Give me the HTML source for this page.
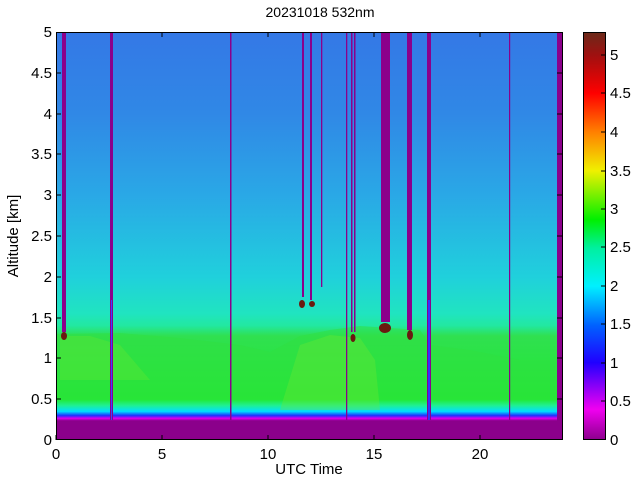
<!DOCTYPE html>
<html><head><meta charset="utf-8"><style>
body{margin:0;background:#fff;width:640px;height:480px;overflow:hidden;font-family:"Liberation Sans",sans-serif}
</style></head><body>
<svg width="640" height="480" xmlns="http://www.w3.org/2000/svg" font-family="Liberation Sans, sans-serif" font-size="15" fill="#000">
<defs>
<linearGradient id="bg" x1="0" y1="32" x2="0" y2="440" gradientUnits="userSpaceOnUse">
<stop offset="0" stop-color="#3478e6"/>
<stop offset="0.2" stop-color="#3088e6"/>
<stop offset="0.4" stop-color="#2aa8e6"/>
<stop offset="0.6" stop-color="#20d0dc"/>
<stop offset="0.69" stop-color="#20e4c0"/>
<stop offset="0.72" stop-color="#22e8a0"/>
<stop offset="0.745" stop-color="#30e050"/>
<stop offset="0.9" stop-color="#20ea30"/>
<stop offset="0.915" stop-color="#20f090"/>
<stop offset="0.93" stop-color="#00e0ff"/>
<stop offset="0.94" stop-color="#2030ff"/>
<stop offset="0.947" stop-color="#e000f0"/>
<stop offset="0.953" stop-color="#8b008b"/>
<stop offset="1" stop-color="#8b008b"/>
</linearGradient>
<linearGradient id="cb" x1="0" y1="440" x2="0" y2="32" gradientUnits="userSpaceOnUse">
<stop offset="0" stop-color="#8b008b"/>
<stop offset="0.075" stop-color="#f000f0"/>
<stop offset="0.19" stop-color="#2000ff"/>
<stop offset="0.28" stop-color="#0060ff"/>
<stop offset="0.377" stop-color="#00f0ff"/>
<stop offset="0.47" stop-color="#00f0a0"/>
<stop offset="0.54" stop-color="#00f000"/>
<stop offset="0.66" stop-color="#f0f000"/>
<stop offset="0.755" stop-color="#ff8000"/>
<stop offset="0.85" stop-color="#ff0000"/>
<stop offset="0.943" stop-color="#a01010"/>
<stop offset="1" stop-color="#6a2a1a"/>
</linearGradient>
</defs>
<text x="320" y="17" text-anchor="middle" font-size="14">20231018 532nm</text>
<rect x="56" y="32" width="506" height="408" fill="url(#bg)"/>
<path d="M56,334 L120,333 L180,338 L240,345 L270,352 L300,336 L330,330 L360,326 L420,330 L430,345 L470,350 L520,360 L556,360 L556,400 L56,400Z" fill="#30e040" opacity="0.5"/>
<path d="M280,410 L300,345 L330,335 L360,338 L375,360 L380,410Z" fill="#70e830" opacity="0.35"/>
<path d="M60,336 L90,336 L120,345 L150,380 L60,380Z" fill="#70e830" opacity="0.3"/>
<g fill="#8b008b">
<rect x="62" y="32" width="4" height="300"/>
<rect x="110" y="32" width="3" height="388"/>
<rect x="230" y="32" width="1.5" height="388"/>
<rect x="302" y="32" width="2" height="265"/>
<rect x="310" y="32" width="2" height="268"/>
<rect x="321" y="32" width="1.3" height="255"/>
<rect x="346" y="32" width="1.3" height="388"/>
<rect x="351" y="32" width="1.5" height="300"/>
<rect x="354" y="32" width="1.5" height="300"/>
<rect x="381" y="32" width="9" height="290"/>
<rect x="407" y="32" width="5" height="298"/>
<rect x="427" y="32" width="4" height="388"/>
<rect x="509" y="32" width="1.2" height="388"/>
<rect x="557" y="32" width="5" height="408"/>
</g>
<rect x="111" y="300" width="1" height="120" fill="#4040ff"/>
<rect x="428" y="300" width="2" height="120" fill="#3030ff"/>
<g fill="#6a1a10">
<ellipse cx="64" cy="336" rx="3" ry="4"/>
<ellipse cx="302" cy="304" rx="3" ry="4"/>
<ellipse cx="312" cy="304" rx="3" ry="3"/>
<ellipse cx="353" cy="338" rx="2.5" ry="4"/>
<ellipse cx="385" cy="328" rx="6" ry="5"/>
<ellipse cx="410" cy="335" rx="3" ry="5"/>
</g>
<rect x="56.5" y="32.5" width="506" height="407" fill="none" stroke="#000"/>
<g stroke="#000">
<path d="M56,440v-5M162,440v-5M268,440v-5M374,440v-5M480,440v-5M162,32v5M268,32v5M374,32v5M480,32v5"/>
<path d="M56,399h5M56,358h5M56,318h5M56,277h5M56,236h5M56,195h5M56,154h5M56,114h5M56,73h5"/>
<path d="M562,399h-5M562,358h-5M562,318h-5M562,277h-5M562,236h-5M562,195h-5M562,154h-5M562,114h-5M562,73h-5"/>
</g>
<g text-anchor="end">
<text x="52" y="445">0</text><text x="52" y="404">0.5</text><text x="52" y="363">1</text><text x="52" y="323">1.5</text><text x="52" y="282">2</text><text x="52" y="241">2.5</text><text x="52" y="200">3</text><text x="52" y="159">3.5</text><text x="52" y="119">4</text><text x="52" y="78">4.5</text><text x="52" y="37">5</text>
</g>
<g text-anchor="middle">
<text x="56" y="459">0</text><text x="162" y="459">5</text><text x="268" y="459">10</text><text x="374" y="459">15</text><text x="480" y="459">20</text>
<text x="309" y="474">UTC Time</text>
</g>
<text transform="translate(18,236) rotate(-90)" text-anchor="middle">Altitude [km]</text>
<rect x="583" y="32" width="22" height="408" fill="url(#cb)"/>
<rect x="583.5" y="32.5" width="22" height="407" fill="none" stroke="#000"/>
<g stroke="#000"><path d="M605,401h-4M605,363h-4M605,324h-4M605,286h-4M605,247h-4M605,209h-4M605,171h-4M605,132h-4M605,93h-4M605,55h-4"/></g>
<g font-size="15">
<text x="610" y="445">0</text><text x="610" y="406">0.5</text><text x="610" y="368">1</text><text x="610" y="329">1.5</text><text x="610" y="291">2</text><text x="610" y="252">2.5</text><text x="610" y="214">3</text><text x="610" y="176">3.5</text><text x="610" y="137">4</text><text x="610" y="98">4.5</text><text x="610" y="60">5</text>
</g>
</svg>
</body></html>
